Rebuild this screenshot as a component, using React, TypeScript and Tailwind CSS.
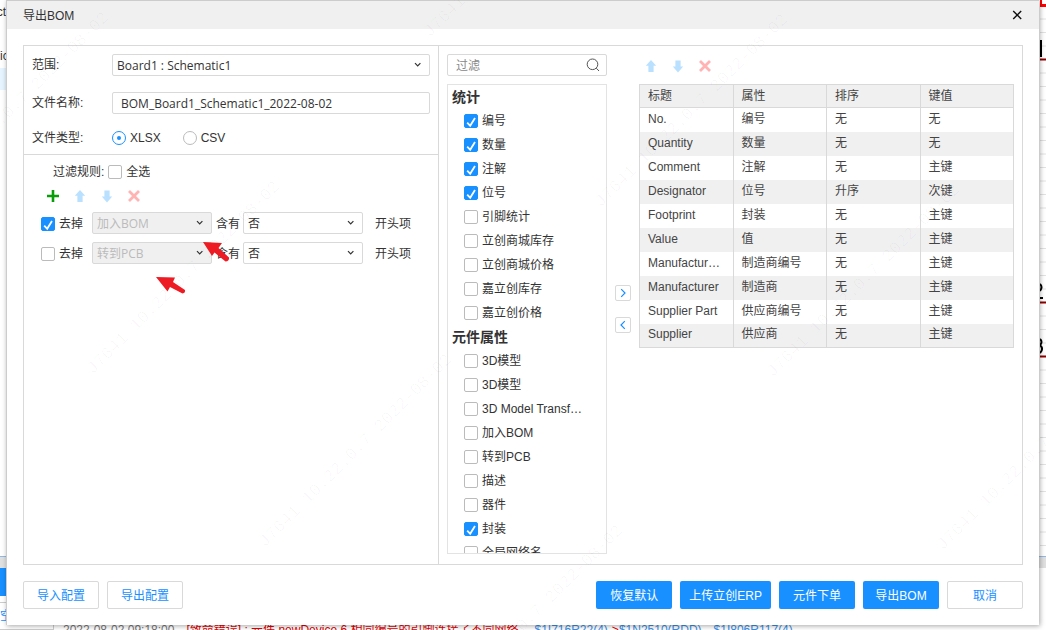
import { useState, type ReactNode } from 'react';

const STATS: [string, boolean][] = [
  ['编号', true],
  ['数量', true],
  ['注解', true],
  ['位号', true],
  ['引脚统计', false],
  ['立创商城库存', false],
  ['立创商城价格', false],
  ['嘉立创库存', false],
  ['嘉立创价格', false],
];

const PROPERTIES: [string, boolean][] = [
  ['3D模型', false],
  ['3D模型', false],
  ['3D Model Transform', false],
  ['加入BOM', false],
  ['转到PCB', false],
  ['描述', false],
  ['器件', false],
  ['封装', true],
  ['全局网络名', false],
];

const COLUMNS = ['标题', '属性', '排序', '键值'];

const ROWS = [
  ['No.', '编号', '无', '无'],
  ['Quantity', '数量', '无', '无'],
  ['Comment', '注解', '无', '主键'],
  ['Designator', '位号', '升序', '次键'],
  ['Footprint', '封装', '无', '主键'],
  ['Value', '值', '无', '主键'],
  ['Manufacturer Part', '制造商编号', '无', '主键'],
  ['Manufacturer', '制造商', '无', '主键'],
  ['Supplier Part', '供应商编号', '无', '主键'],
  ['Supplier', '供应商', '无', '主键'],
];

const WATERMARKS = [
  { x: -81, y: 203 },
  { x: 90, y: 372 },
  { x: 262, y: 545 },
  { x: 433, y: 716 },
  { x: 427, y: 35 },
  { x: 598, y: 205 },
  { x: 770, y: 375 },
  { x: 940, y: 548 },
];

function CheckBox({ label, checked = false }: { label: string; checked?: boolean }) {
  const [on, setOn] = useState(checked);
  return (
    <label className="flex min-w-0 items-center gap-1">
      <span className="grid shrink-0">
        <input
          type="checkbox"
          checked={on}
          onChange={() => setOn(!on)}
          className="col-start-1 row-start-1 size-3.5 appearance-none rounded-xs border border-[#bbb] bg-white checked:border-[#1890ff] checked:bg-[#1890ff]"
        />
        {on && (
          <svg viewBox="0 0 14 14" className="pointer-events-none col-start-1 row-start-1 size-3.5" aria-hidden="true">
            <path d="M3.2 8.6 6.2 11.8 11 4" fill="none" stroke="#fff" strokeWidth="1.8" />
          </svg>
        )}
      </span>
      <span className="truncate">{label}</span>
    </label>
  );
}

function Radio({ label, checked = false }: { label: string; checked?: boolean }) {
  return (
    <label className="flex items-center gap-1">
      <input
        type="radio"
        name="file-type"
        defaultChecked={checked}
        className="grid size-3.5 appearance-none place-items-center rounded-full border border-[#bbb] bg-white before:size-1 before:rounded-full checked:border-[#1890ff] checked:before:bg-[#1890ff]"
      />
      {label}
    </label>
  );
}

function Select({ id, label, value, disabled = false }: { id: string; label: string; value: string; disabled?: boolean }) {
  return (
    <span className="grid min-w-0 flex-1 items-center">
      <select
        id={id}
        aria-label={label}
        disabled={disabled}
        className="col-start-1 row-start-1 h-[22px] w-full appearance-none rounded-xs border border-[#d9d9d9] bg-white pt-px pr-6 pl-1 font-['Open_Sans','Noto_Sans_CJK_SC',sans-serif] text-[12px] text-[#333] disabled:bg-[#f0f0f0] disabled:text-[#bbb] disabled:opacity-100"
      >
        <option>{value}</option>
      </select>
      <svg viewBox="0 0 8 6" className="pointer-events-none col-start-1 row-start-1 mr-2 h-1.5 w-2 justify-self-end" aria-hidden="true">
        <path d="M1 1.2 3.7 4 6.400 1.2" fill="none" stroke="#333" strokeWidth="1.2" />
      </svg>
    </span>
  );
}

function IconButton({ label, children }: { label: string; children: ReactNode }) {
  return (
    <button type="button" aria-label={label} className="grid size-3.5 place-items-center">
      <svg viewBox="0 0 14 14" className="size-3.5" aria-hidden="true">
        {children}
      </svg>
    </button>
  );
}

function MoveButtons() {
  return (
    <>
      <IconButton label="上移">
        <path d="M7 1 12.2 6.8H9.6V13H4.4V6.8H1.8Z" fill="#bae0ff" />
      </IconButton>
      <IconButton label="下移">
        <path d="M7 13.4 12.2 7.6H9.6V1.6H4.4V7.6H1.8Z" fill="#bae0ff" />
      </IconButton>
      <IconButton label="删除">
        <path d="M2 2 12 12M12 2 2 12" fill="none" stroke="#ffb3b3" strokeWidth="2.8" />
      </IconButton>
    </>
  );
}

function RuleRow({ id, field, checked = false }: { id: string; field: string; checked?: boolean }) {
  return (
    <div className="flex h-[22px] items-center">
      <div className="w-[51px] shrink-0 pt-0.5">
        <CheckBox label="去掉" checked={checked} />
      </div>
      <div className="flex w-[120px] shrink-0">
        <Select id={id + '-field'} label="属性" value={field} disabled />
      </div>
      <span className="w-[31px] shrink-0 pt-0.5 pl-1">含有</span>
      <div className="flex w-[120px] shrink-0">
        <Select id={id + '-value'} label="值" value="否" />
      </div>
      <span className="pt-px pl-3">开头项</span>
    </div>
  );
}

function Group({ title, items }: { title: string; items: [string, boolean][] }) {
  return (
    <section>
      <h3 className="h-6 pl-1 text-[14px] leading-6 font-bold">{title}</h3>
      <ul>
        {items.map(([name, checked], i) => (
          <li key={i} className="flex h-6 items-center pr-5 pl-4">
            <CheckBox label={name} checked={checked} />
          </li>
        ))}
      </ul>
    </section>
  );
}

function Button({ children, primary = false }: { children: ReactNode; primary?: boolean }) {
  return (
    <button
      type="button"
      className={
        primary
          ? 'h-7 min-w-[76px] rounded-xs bg-[#1890ff] px-[9px] pt-0.5 text-white'
          : 'h-7 min-w-[76px] rounded-xs border border-[#d9d9d9] bg-white px-2 pt-0.5 text-[#1890ff]'
      }
    >
      {children}
    </button>
  );
}

function Arrow({ label, d }: { label: string; d: string }) {
  return (
    <button type="button" aria-label={label} className="grid size-4 place-items-center rounded-xs border border-[#d9d9d9] bg-white">
      <svg viewBox="0 0 10 10" className="size-2.5" aria-hidden="true">
        <path d={d} fill="none" stroke="#1890ff" strokeWidth="1.2" />
      </svg>
    </button>
  );
}

function Backdrop() {
  return (
    <div className="absolute inset-0 flex flex-col justify-between overflow-hidden bg-white" aria-hidden="true">
      <div className="flex flex-1 justify-between">
        <div className="w-1.5 overflow-hidden whitespace-nowrap">
          <div className="flex h-6 items-center justify-end">ct</div>
          <div className="mt-5 flex h-6 items-center">ic</div>
          <div className="h-[22px] bg-[#e6f4ff]" />
        </div>
        <svg className="h-full w-1.5" aria-hidden="true">
          <defs>
            <pattern id="grid" width="6" height="27" y="5" patternUnits="userSpaceOnUse">
              <path d="M0 .5H6M0 14H6" stroke="#e2e2e2" />
            </pattern>
          </defs>
          <rect width="6" height="100%" fill="url(#grid)" />
          <path d="M0 5.5H6" stroke="#f00" strokeWidth="3" />
          <path d="M1 0V4" stroke="#f00" strokeWidth="2" />
          <path d="M1 40V57" stroke="#000" strokeWidth="2" />
          <path d="M0 59.5H6M0 302.5H6M0 356.5H6" stroke="#8b0000" strokeWidth="2" />
          <path d="M0 284Q3 287 0 291M0 298H3M0 339Q3 342 0 345Q4 349 0 353" fill="none" stroke="#000" strokeWidth="2" />
        </svg>
      </div>
      <div className="flex h-[74px] flex-col border-t border-[#91b9e8] bg-white">
        <div className="h-[11px] bg-[#e0e0e0]" />
        <div className="h-7 w-1.5 bg-[#1890ff]" />
        <div className="mt-1.5 flex h-7 w-[53px] items-center border-y border-[#ccc] text-[#1890ff]">空</div>
      </div>
      <p className="absolute top-[622px] left-[53px] border-l border-[#ccc] pl-[9px] leading-4 whitespace-nowrap text-[#777]">
        2022-08-02 09:18:00
        <span className="ml-3 text-[#e00000]">[致命错误] : 元件 newDevice.6 相同编号的引脚连接了不同网络</span>
        <span className="ml-4 text-[#3a8ee6]">$1I716R22(4)</span>
        <span className="text-[#e00000]">-&gt;</span>
        <span className="text-[#3a8ee6]">$1N2510(RDD)、$1I806R117(4)</span>
      </p>
    </div>
  );
}

export default function App() {
  return (
    <div className="relative h-screen overflow-hidden font-['Liberation_Sans','Noto_Sans_CJK_SC',sans-serif] text-[12px] leading-4 text-[#333]">
      <Backdrop />
      <div
        role="dialog"
        aria-labelledby="dialog-title"
        className="relative mr-[7px] ml-1.5 flex h-[calc(100vh-5px)] flex-col border-t border-l border-[#ccc] bg-white shadow-[1px_1px_5px_rgba(0,0,0,0.35)]"
      >
        <header className="flex h-7 shrink-0 items-center justify-between bg-[#f0f0f0] pr-4 pl-4">
          <h2 id="dialog-title" className="pt-0.5">导出BOM</h2>
          <button type="button" aria-label="关闭" className="grid size-3 place-items-center">
            <svg viewBox="0 0 12 12" className="size-3" aria-hidden="true">
              <path d="M2.2 2 10.2 10M10.200 2 2.2 10" stroke="#111" strokeWidth="1.4" />
            </svg>
          </button>
        </header>

        <main className="mx-4 mt-4 flex min-h-0 flex-1 border border-[#d9d9d9]">
          <section className="w-[415px] shrink-0 border-r border-[#d9d9d9]">
            <form className="border-b border-[#d9d9d9] pt-2 pr-2 pb-1 pl-2">
              <div className="flex h-[22px] items-center">
                <label htmlFor="scope" className="w-20 shrink-0">范围:</label>
                <Select id="scope" label="范围" value="Board1 : Schematic1" />
              </div>
              <div className="mt-4 flex h-[22px] items-center">
                <label htmlFor="file-name" className="w-20 shrink-0">文件名称:</label>
                <input
                  id="file-name"
                  type="text"
                  defaultValue="BOM_Board1_Schematic1_2022-08-02"
                  className="h-[22px] min-w-0 flex-1 rounded-xs border border-[#d9d9d9] px-2 font-['Open_Sans','Noto_Sans_CJK_SC',sans-serif] text-[12px]"
                />
              </div>
              <fieldset className="mt-3 flex h-6 items-center">
                <span className="w-20 shrink-0">文件类型:</span>
                <div className="flex gap-[22px]">
                  <Radio label="XLSX" checked />
                  <Radio label="CSV" />
                </div>
              </fieldset>
            </form>

            <div className="pt-2 pl-[17px]">
              <div className="flex h-[18px] items-center gap-1 pl-3">
                <span>过滤规则:</span>
                <CheckBox label="全选" />
              </div>
              <div className="mt-[7px] flex h-4 items-center gap-[13px] pl-[5px]">
                <IconButton label="添加">
                  <path d="M7 1V13M1 7H13" stroke="#0a9d0a" strokeWidth="2.6" />
                </IconButton>
                <MoveButtons />
              </div>
              <div className="mt-2 flex flex-col gap-2">
                <RuleRow id="rule-1" field="加入BOM" checked />
                <RuleRow id="rule-2" field="转到PCB" />
              </div>
            </div>
          </section>

          <section className="flex w-44 shrink-0 flex-col px-2 pt-2 pb-[10px]">
            <label className="flex h-[22px] shrink-0 items-center rounded-xs border border-[#d9d9d9] pr-1.5 pl-2">
              <input type="text" aria-label="过滤" placeholder="过滤" className="min-w-0 flex-1 pt-px outline-none placeholder:text-[#888]" />
              <svg viewBox="0 0 14 14" className="size-3.5" aria-hidden="true">
                <circle cx="6.5" cy="6.3" r="5.3" fill="none" stroke="#555" />
                <path d="M10.3 10.2 13 13" stroke="#555" />
              </svg>
            </label>
            <div className="mt-2 min-h-0 flex-1 overflow-hidden border border-[#e3e3e3]">
              <Group title="统计" items={STATS} />
              <Group title="元件属性" items={PROPERTIES} />
            </div>
          </section>

          <div className="flex w-4 shrink-0 flex-col justify-center gap-4 pt-2">
            <Arrow label="添加到表格" d="M3.2 1.2 7 5 3.2 8.8" />
            <Arrow label="从表格移除" d="M6.8 1.2 3 5 6.8 8.8" />
          </div>

          <section className="min-w-0 flex-1 py-2 pr-2 pl-2">
            <div className="flex h-[30px] items-center gap-[13px] pb-1.5 pl-[5px]">
              <MoveButtons />
            </div>
            <table className="w-full table-fixed border-collapse border border-[#d9d9d9] text-left text-[#444]">
              <thead className="border-b border-[#d9d9d9] bg-[#f0f0f0]">
                <tr className="h-[23px]">
                  {COLUMNS.map((c) => (
                    <th key={c} className="border-x border-[#d9d9d9] px-2 font-normal">{c}</th>
                  ))}
                </tr>
              </thead>
              <tbody>
                {ROWS.map((row) => (
                  <tr key={row[0]} className="h-6 even:bg-[#f0f0f0]">
                    {row.map((cell, i) => (
                      <td key={i} className="truncate border-x border-[#d9d9d9] px-2 pb-0.5">{cell}</td>
                    ))}
                  </tr>
                ))}
              </tbody>
            </table>
          </section>
        </main>

        <footer className="mx-4 my-4 flex shrink-0 gap-2">
          <Button>导入配置</Button>
          <Button>导出配置</Button>
          <div className="flex flex-1 justify-end gap-2">
            <Button primary>恢复默认</Button>
            <Button primary>上传立创ERP</Button>
            <Button primary>元件下单</Button>
            <Button primary>导出BOM</Button>
            <Button>取消</Button>
          </div>
        </footer>
      </div>

      <div className="pointer-events-none absolute inset-0 overflow-hidden" aria-hidden="true">
        {WATERMARKS.map((m) => (
          <span
            key={m.x}
            className="absolute origin-left -translate-y-1/2 -rotate-45 font-['Liberation_Mono',monospace] text-[17px] whitespace-nowrap text-black/3"
            style={{ left: m.x, top: m.y }}
          >
            J7641 10.22.0.7 2022-08-02
          </span>
        ))}
        <svg viewBox="0 0 28 20" className="absolute top-[242px] left-[203px] h-5 w-7">
          <path d="M0 0 19 1 15.500 6 26 15.500Q26.500 19 22.500 19.500L11.500 10.500 9 14Z" fill="#ed1c24" />
        </svg>
        <svg viewBox="0 0 30 20" className="absolute top-[277px] left-[156px] h-5 w-[30px]">
          <path d="M0 0 19 0.500 17 5 29 13Q29.500 16 26.500 16.500L14 10 11.500 14.500Z" fill="#ed1c24" />
        </svg>
      </div>
    </div>
  );
}
